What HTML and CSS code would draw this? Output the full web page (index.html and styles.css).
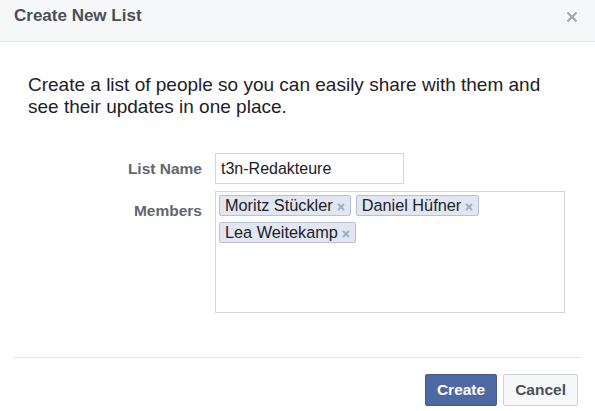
FILE: index.html
```html
<!DOCTYPE html>
<html lang="en">
<head>
    <meta charset="UTF-8">
    <title>Create New List</title>
    <link rel="stylesheet" href="styles.css">
</head>
<body>

<div class="dialog">
    <div class="dialog-header">
        <h2>Create New List</h2>
        <svg class="close-button" width="12" height="12" viewBox="0 0 12 12">
            <path d="M1.5 1.5 L10.5 10.5 M10.5 1.5 L1.5 10.5" stroke="#a5a8ad" stroke-width="2.2"/>
        </svg>
    </div>

    <div class="dialog-body">
        <p class="intro">Create a list of people so you can easily share with them and see their updates in one place.</p>

        <div class="form-grid">
            <label for="listName">List Name</label>
            <input type="text" id="listName" value="t3n-Redakteure">

            <label class="members-label">Members</label>
            <div class="members-box">
                <span class="token">Moritz Stückler<svg class="token-x" width="8" height="8" viewBox="0 0 8 8"><path d="M1 1 L7 7 M7 1 L1 7" stroke="#9eaecb" stroke-width="2"/></svg></span>
                <span class="token">Daniel Hüfner<svg class="token-x" width="8" height="8" viewBox="0 0 8 8"><path d="M1 1 L7 7 M7 1 L1 7" stroke="#9eaecb" stroke-width="2"/></svg></span>
                <span class="token">Lea Weitekamp<svg class="token-x" width="8" height="8" viewBox="0 0 8 8"><path d="M1 1 L7 7 M7 1 L1 7" stroke="#9eaecb" stroke-width="2"/></svg></span>
            </div>
        </div>
    </div>

    <div class="dialog-footer">
        <button class="create-button">Create</button>
        <button class="cancel-button">Cancel</button>
    </div>
</div>

</body>
</html>
```

FILE: styles.css
```css
body {
    font-family: "Liberation Sans", Arial, sans-serif;
    margin: 0;
    background-color: #fff;
}

.dialog {
    width: 595px;
    height: 411px;
    background: #fff;
}

.dialog-header {
    height: 42px;
    background-color: #f6f7f9;
    border-bottom: 1px solid #e5e5e5;
    box-sizing: border-box;
    display: flex;
    align-items: center;
    justify-content: space-between;
    padding: 0 17px 0 14px;
}

.dialog-header h2 {
    margin: 0 0 9px 0;
    font-size: 17px;
    font-weight: bold;
    color: #4b4f56;
}

.close-button {
    margin-bottom: 8px;
}

.dialog-body {
    padding: 32px 28px 0 28px;
}

.intro {
    margin: 0;
    max-width: 540px;
    font-size: 19px;
    line-height: 22px;
    color: #1d2129;
}

.form-grid {
    display: grid;
    grid-template-columns: 174px 350px;
    column-gap: 13px;
    row-gap: 7px;
    margin-top: 35px;
}

.form-grid label {
    text-align: right;
    font-size: 15.5px;
    font-weight: bold;
    color: #606770;
    align-self: center;
}

.form-grid label.members-label {
    align-self: start;
    padding-top: 11px;
}

input[type="text"] {
    width: 189px;
    height: 31px;
    box-sizing: border-box;
    border: 1px solid #d3d6db;
    padding: 0 5px;
    font-family: inherit;
    font-size: 16px;
    color: #1d2129;
}

.members-box {
    height: 122px;
    box-sizing: border-box;
    border: 1px solid #d3d6db;
    padding: 3px 3px;
    display: flex;
    flex-wrap: wrap;
    align-content: flex-start;
    gap: 6px 5px;
}

.token {
    display: inline-flex;
    align-items: center;
    height: 21px;
    box-sizing: border-box;
    padding: 0 5px 0 5px;
    background-color: #e2e6f0;
    border: 1px solid #b8c0d3;
    border-radius: 2px;
    font-size: 16.3px;
    color: #1d2129;
}

.token-x {
    margin-left: 4px;
    margin-top: 3px;
}

.dialog-footer {
    margin: 44px 14px 0 14px;
    border-top: 1px solid #e5e5e5;
    padding: 16px 3px 0 0;
    display: flex;
    justify-content: flex-end;
    gap: 6px;
}

.dialog-footer button {
    height: 32px;
    padding: 0 11px;
    font-family: inherit;
    font-size: 15.5px;
    font-weight: bold;
    border-radius: 2px;
    cursor: pointer;
}

.create-button {
    background-color: #4e69a2;
    border: 1px solid #435a8b;
    color: #fff;
}

.cancel-button {
    background-color: #f6f7f9;
    border: 1px solid #ced0d4;
    color: #4b4f56;
    padding: 0 12px;
}
```
